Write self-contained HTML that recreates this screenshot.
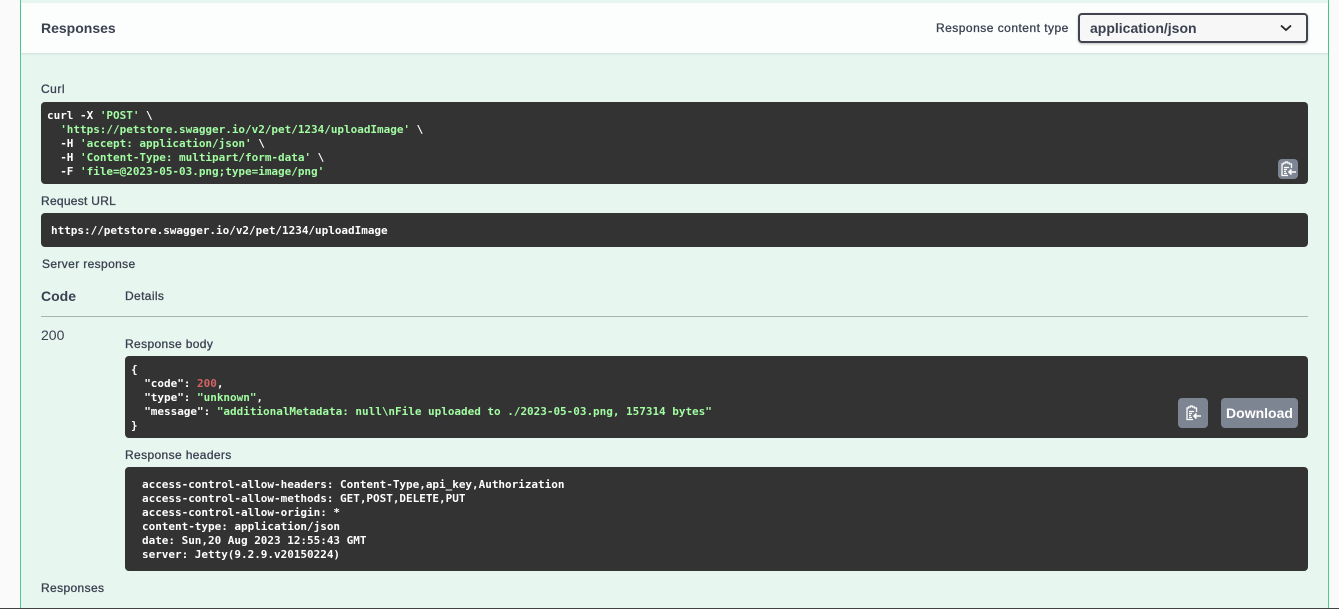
<!DOCTYPE html>
<html><head><meta charset="utf-8">
<style>
html,body{margin:0;padding:0;width:1339px;height:609px;overflow:hidden;background:#fafafa}
body{position:relative;font-family:"Liberation Sans",sans-serif;color:#3b4151}
.a{position:absolute;white-space:nowrap}
.t{font-size:12px;line-height:14px;color:#3b4151;letter-spacing:.37px;-webkit-text-stroke:.3px #3b4151}
.b{font-weight:bold}
.code{position:absolute;background:#333;border-radius:4px}
pre{position:absolute;margin:0;font:bold 11px/14px "DejaVu Sans Mono",monospace;letter-spacing:-.022px;color:#fff;white-space:pre}
.g{color:#a2fca2}.r{color:#d36363}
.btn{position:absolute;background:#7d8492;border-radius:4px}
</style></head><body>
<div class="a" style="left:20px;top:0;width:1309px;height:608px;background:#e7f6ef;border-left:1px solid #49cc90;border-right:1px solid #49cc90;box-sizing:border-box"></div>
<div class="a" style="left:21px;top:3px;width:1307px;height:50px;background:#fcfefd;box-shadow:0 1px 2px rgba(0,0,0,.1)"></div>
<div class="a b" style="left:41px;top:20px;font-size:14px;line-height:16px;color:#3b4151">Responses</div>
<div class="a t" style="left:936px;top:21px;letter-spacing:.48px">Response content type</div>
<div class="a" style="left:1078px;top:13px;width:230px;height:30px;box-sizing:border-box;background:#f7f7f7;border:2px solid #41444e;border-radius:4px;box-shadow:0 1px 2px rgba(0,0,0,.25)"></div>
<div class="a b" style="left:1090px;top:20px;font-size:14px;line-height:16px;color:#3b4151">application/json</div>
<svg class="a" style="left:1279px;top:22px" width="14" height="12" viewBox="0 0 14 12"><path d="M2 3.500L7 8l5-4.500" fill="none" stroke="#222" stroke-width="1.800"/></svg>

<div class="a t" style="left:41px;top:82px;letter-spacing:.5px">Curl</div>
<div class="code" style="left:41px;top:102px;width:1267px;height:82px"></div>
<pre style="left:47px;top:109px">curl -X <span class="g">'POST'</span> \
  <span class="g">'https://petstore.swagger.io/v2/pet/1234/uploadImage'</span> \
  -H <span class="g">'accept: application/json'</span> \
  -H <span class="g">'Content-Type: multipart/form-data'</span> \
  -F <span class="g">'file=@2023-05-03.png;type=image/png'</span></pre>
<div class="btn" style="left:1278px;top:159px;width:20px;height:20px"></div>
<svg class="a" style="left:1278px;top:159px" width="20" height="20" viewBox="0 0 20 20" fill="none" stroke="#fff" stroke-width="1.300"><path d="M13.500 9V5H11.500V4H9.500V3H7.500V4H5.500V5H4V16.500H10"/><path d="M6 8.500H11M6 10.500H9M6 12.500H8M6 14.500H9"/><path d="M18 13H11.500M13.500 10.500L11 13L13.500 15.500" stroke-width="1.600"/></svg>

<div class="a t" style="left:41px;top:194px;letter-spacing:.28px">Request URL</div>
<div class="code" style="left:41px;top:213px;width:1267px;height:34px"></div>
<pre style="left:51px;top:224px">https://petstore.swagger.io/v2/pet/1234/uploadImage</pre>

<div class="a t" style="left:42px;top:257px">Server response</div>
<div class="a b" style="left:41px;top:288px;font-size:14px;line-height:16px">Code</div>
<div class="a t" style="left:125px;top:289px">Details</div>
<div class="a" style="left:41px;top:316px;width:1267px;height:1px;background:#a9b3b3"></div>
<div class="a" style="left:41px;top:327px;font-size:14px;line-height:16px">200</div>

<div class="a t" style="left:125px;top:337px">Response body</div>
<div class="code" style="left:125px;top:356px;width:1183px;height:82px"></div>
<pre style="left:131px;top:363px">{
  "code": <span class="r">200</span>,
  "type": <span class="g">"unknown"</span>,
  "message": <span class="g">"additionalMetadata: null\nFile uploaded to ./2023-05-03.png, 157314 bytes"</span>
}</pre>
<div class="btn" style="left:1178px;top:398px;width:30px;height:30px"></div>
<svg class="a" style="left:1183px;top:403px" width="20" height="20" viewBox="0 0 20 20" fill="none" stroke="#fff" stroke-width="1.300"><path d="M13.500 9V5H11.500V4H9.500V3H7.500V4H5.500V5H4V16.500H10"/><path d="M6 8.500H11M6 10.500H9M6 12.500H8M6 14.500H9"/><path d="M18 13H11.500M13.500 10.500L11 13L13.500 15.500" stroke-width="1.600"/></svg>
<div class="btn b" style="left:1221px;top:398px;width:77px;height:30px;color:#fff;font-size:14px;line-height:30px;text-align:center">Download</div>

<div class="a t" style="left:125px;top:448px">Response headers</div>
<div class="code" style="left:125px;top:467px;width:1183px;height:104px"></div>
<pre style="left:142px;top:478px">access-control-allow-headers: Content-Type,api_key,Authorization
access-control-allow-methods: GET,POST,DELETE,PUT
access-control-allow-origin: *
content-type: application/json
date: Sun,20 Aug 2023 12:55:43 GMT
server: Jetty(9.2.9.v20150224)</pre>

<div class="a t" style="left:41px;top:581px">Responses</div>
<div class="a" style="left:0;top:608px;width:1339px;height:1px;background:#444"></div>
</body></html>
